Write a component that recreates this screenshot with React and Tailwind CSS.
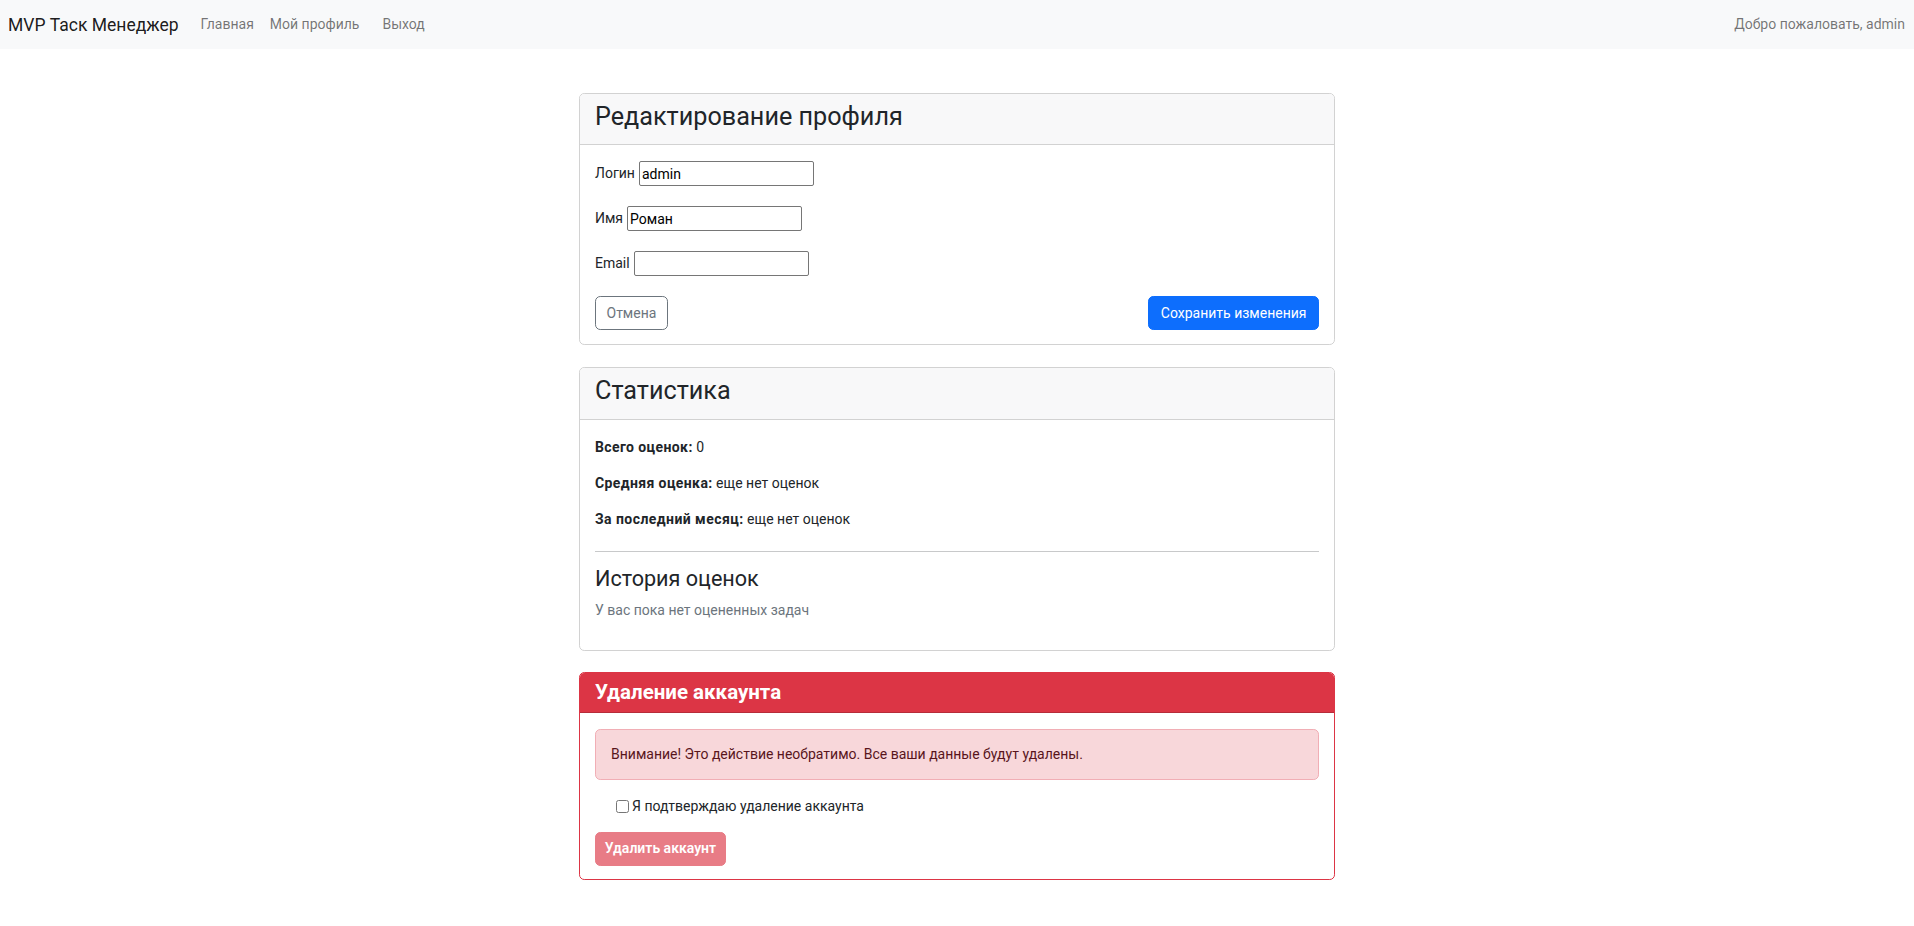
import React from "react";

function Card({ children, className = "" }) {
  return <div className={"border rounded-[5.25px] bg-white " + className}>{children}</div>;
}

function Field({ label, value }) {
  return (
    <div className="flex items-center h-[25px]">
      <label className="leading-[21px]">{label}</label>
      <input
        type="text"
        defaultValue={value}
        className="ml-[4px] w-[175px] h-[25px] border border-[#767676] rounded-[2px] px-[2px] text-[14px] text-black bg-white outline-none"
      />
    </div>
  );
}

export default function App() {
  return (
    <div className="min-h-screen bg-white font-['Roboto','Liberation_Sans',sans-serif] text-[14px] leading-[21px] text-[#212529]">
      <nav className="h-[49px] bg-[#f8f9fa] flex items-center pl-[8px] pr-[9px]">
        <span className="text-[17.5px] leading-[26px] text-[rgba(0,0,0,0.9)]">MVP Таск Менеджер</span>
        <a className="ml-[22px] text-[rgba(0,0,0,0.55)]">Главная</a>
        <a className="ml-[16px] text-[rgba(0,0,0,0.55)]">Мой профиль</a>
        <a className="ml-[23px] text-[rgba(0,0,0,0.55)]">Выход</a>
        <span className="ml-auto text-[rgba(0,0,0,0.55)]">Добро пожаловать, admin</span>
      </nav>

      <main className="flex justify-center pt-[44px] pb-[40px]">
        <div className="w-[756px] flex flex-col">
          {/* Edit profile */}
          <Card className="border-[#d2d2d2]">
            <div className="bg-[#f8f8f9] border-b border-[#d2d2d2] rounded-t-[4.25px] px-[15px] pt-[8px] pb-[13px]">
              <h3 className="text-[25.2px] leading-[29.4px] font-normal">Редактирование профиля</h3>
            </div>
            <div className="px-[15px] pt-[16px] pb-[14px] flex flex-col gap-[20px]">
              <Field label="Логин" value="admin" />
              <Field label="Имя" value="Роман" />
              <Field label="Email" value="" />
              <div className="flex justify-between items-center">
                <button className="h-[34px] px-[10.5px] border border-[#6c757d] text-[#6c757d] rounded-[5.25px] bg-white">
                  Отмена
                </button>
                <button className="h-[34px] px-[11.5px] border border-[#0d6efd] bg-[#0d6efd] text-white rounded-[5.25px]">
                  Сохранить изменения
                </button>
              </div>
            </div>
          </Card>

          {/* Stats */}
          <Card className="border-[#d2d2d2] mt-[22px]">
            <div className="bg-[#f8f8f9] border-b border-[#d2d2d2] rounded-t-[4.25px] px-[15px] pt-[8px] pb-[13px]">
              <h3 className="text-[25.2px] leading-[29.4px] font-normal">Статистика</h3>
            </div>
            <div className="px-[15px] pt-[17px] pb-[15px]">
              <p className="mb-[15px]">
                <strong className="font-bold tracking-[0.4px]">Всего оценок:</strong> 0
              </p>
              <p className="mb-[15px]">
                <strong className="font-bold tracking-[0.4px]">Средняя оценка:</strong> еще нет оценок
              </p>
              <p>
                <strong className="font-bold tracking-[0.45px]">За последний месяц:</strong> еще нет оценок
              </p>
              <hr className="mt-[21px] border-0 border-t border-[#c8c9ca]" />
              <h4 className="mt-[14px] mb-[8px] text-[21.6px] leading-[25.9px] font-normal">История оценок</h4>
              <p className="text-[#6c757d] mb-[14px]">У вас пока нет оцененных задач</p>
            </div>
          </Card>

          {/* Delete account */}
          <Card className="border-[#dc3545] mt-[21px]">
            <div className="bg-[#dc3545] border-b border-[#b62c39] rounded-t-[4.25px] px-[15px] py-[7px]">
              <h4 className="text-[20.5px] leading-[25.2px] font-bold text-white">Удаление аккаунта</h4>
            </div>
            <div className="px-[15px] pt-[16px] pb-[13px]">
              <div className="border border-[#f1aeb5] bg-[#f8d7da] text-[#58151c] rounded-[5.25px] px-[15px] py-[14px]">
                Внимание! Это действие необратимо. Все ваши данные будут удалены.
              </div>
              <div className="mt-[16px] pl-[21px] flex items-center h-[21px]">
                <input type="checkbox" className="m-0 mr-[3px] w-[13px] h-[13px] mt-[1px]" />
                <span>Я подтверждаю удаление аккаунта</span>
              </div>
              <button
                disabled
                className="mt-[15px] h-[34px] w-[131px] rounded-[5.25px] bg-[#e87c86] border border-[#e87c86] text-white font-semibold"
              >
                Удалить аккаунт
              </button>
            </div>
          </Card>
        </div>
      </main>
    </div>
  );
}
